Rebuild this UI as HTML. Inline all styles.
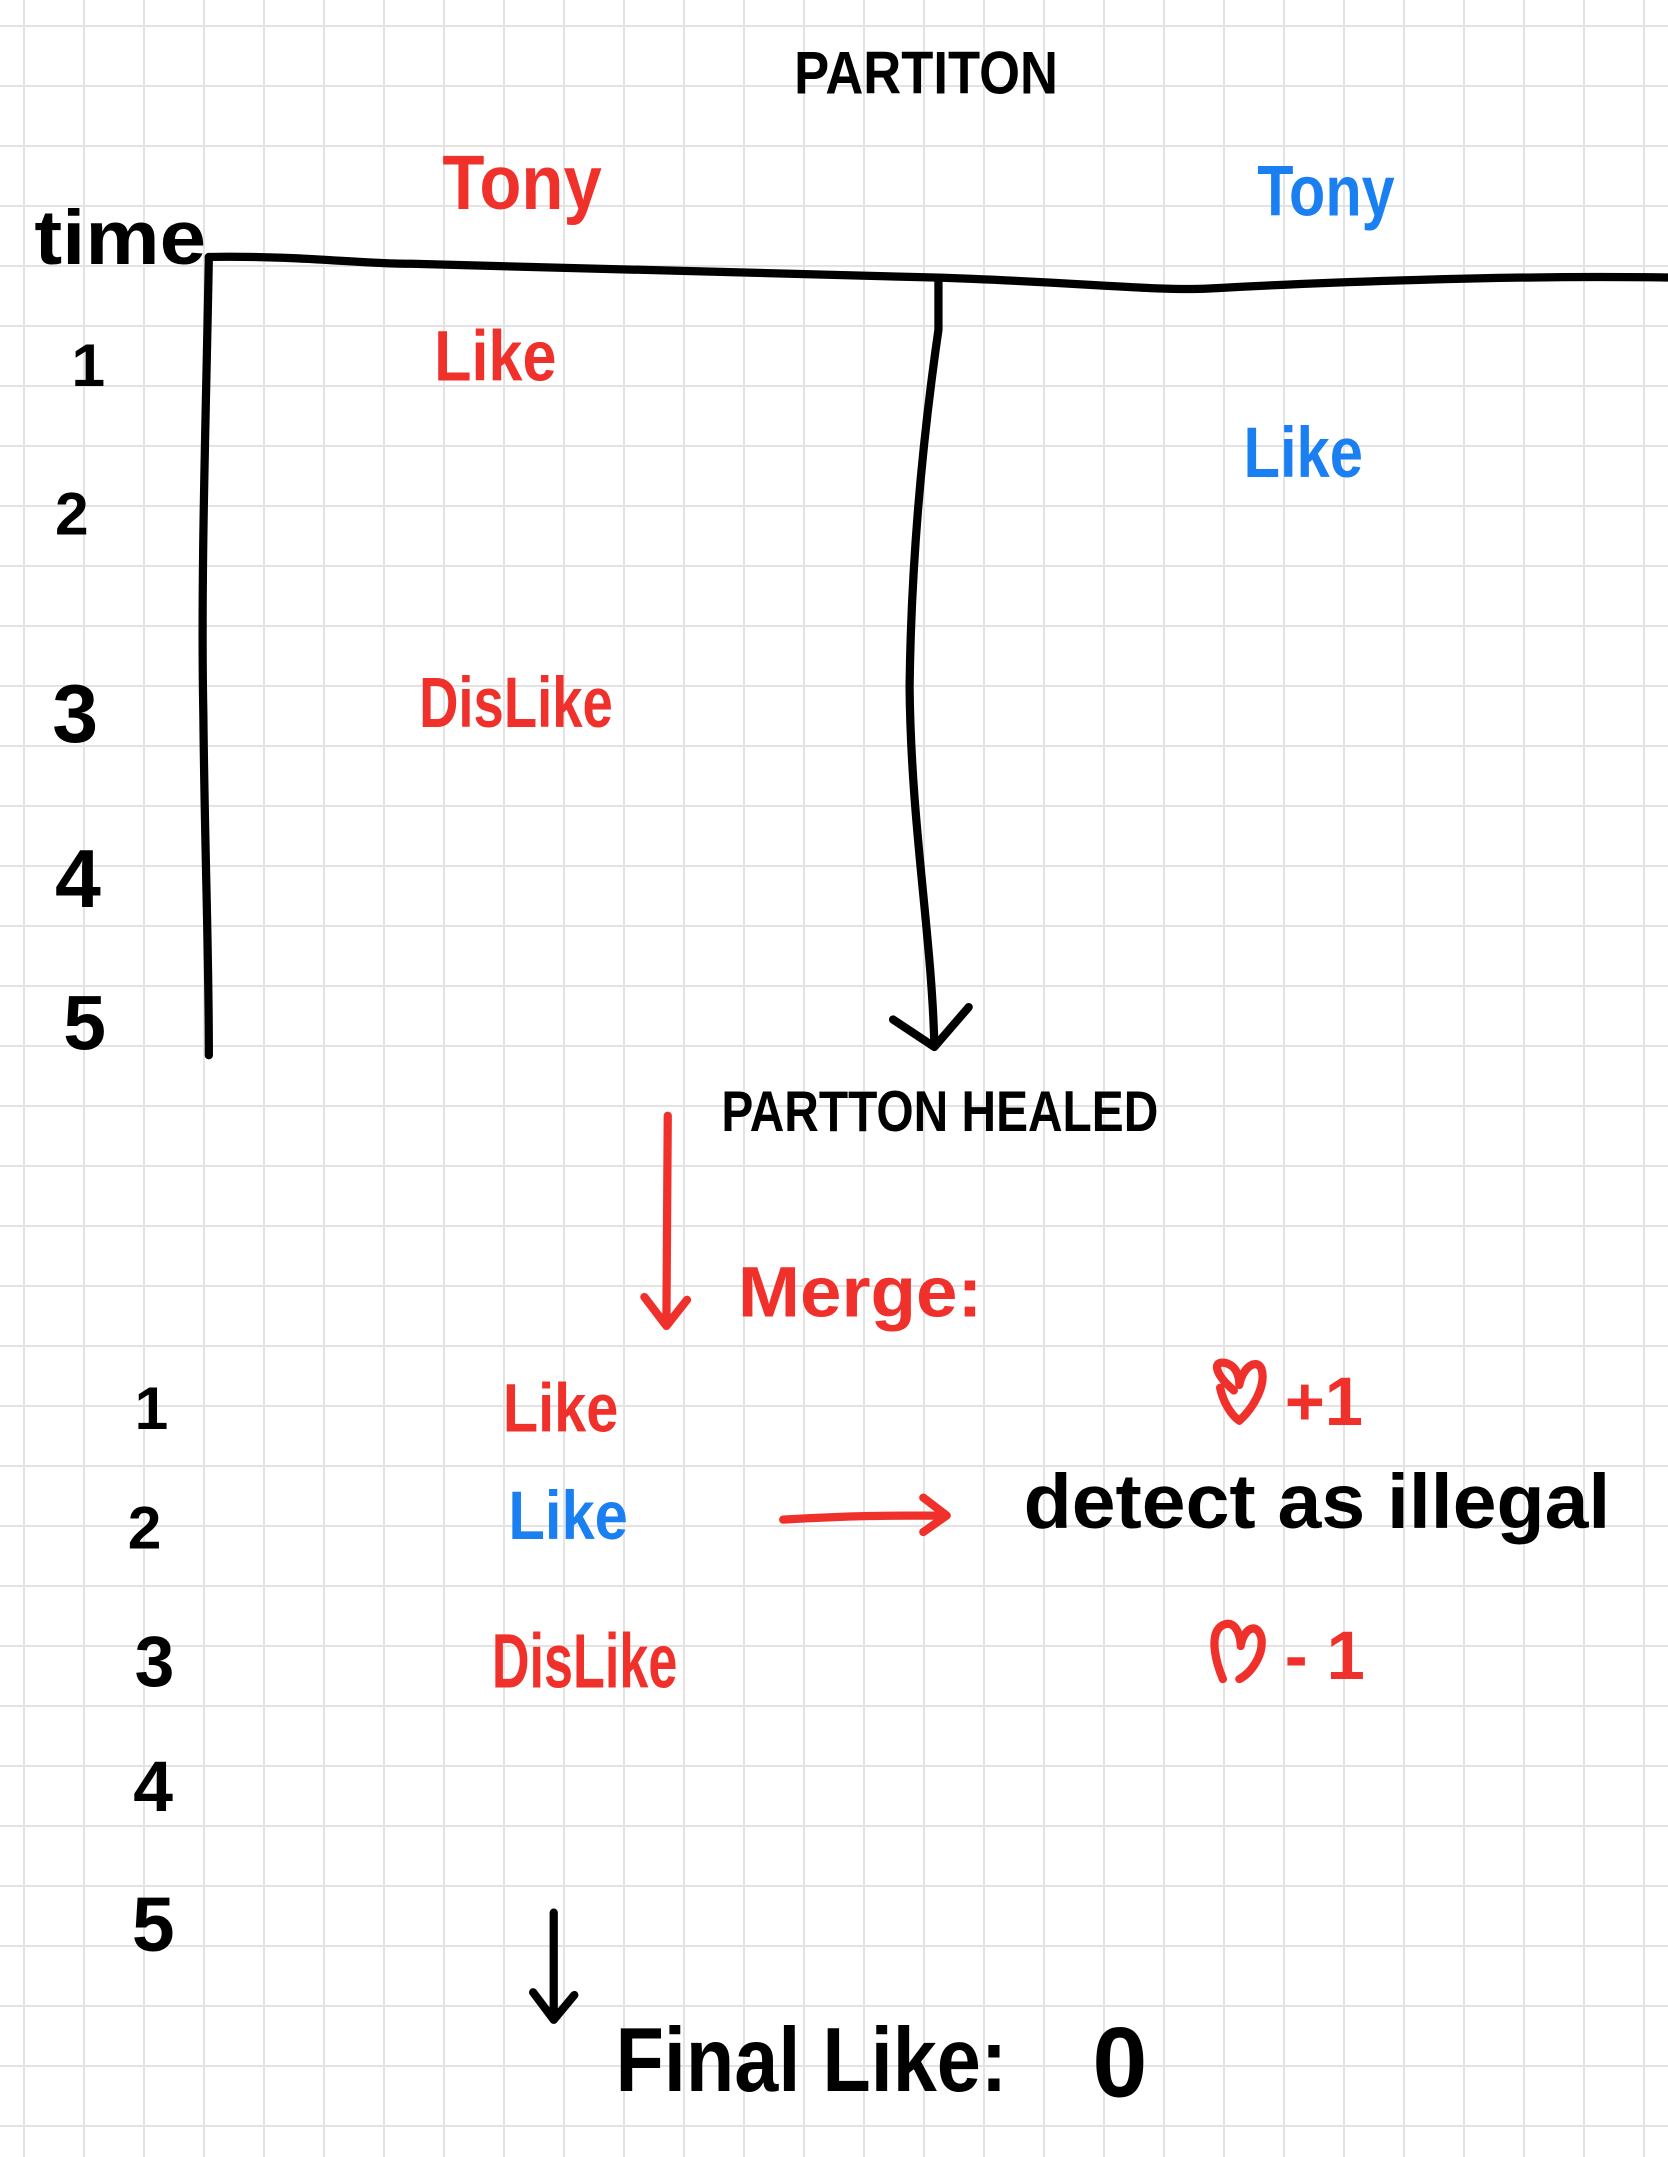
<!DOCTYPE html>
<html><head><meta charset="utf-8"><style>
html,body{margin:0;padding:0;}
body{width:1668px;height:2157px;overflow:hidden;background-color:#fff;
background-image:linear-gradient(to right,#e3e3e3 2px,transparent 2px),linear-gradient(to bottom,#e3e3e3 2px,transparent 2px);
background-size:60px 60px;background-position:23px 25px;}
svg{position:absolute;left:0;top:0;}
text{font-family:"Liberation Sans",sans-serif;font-weight:bold;}
</style></head><body>
<svg width="1668" height="2157" viewBox="0 0 1668 2157">
<g transform="scale(1.374)">
<g fill="none" stroke="#000" stroke-width="6" stroke-linecap="round" stroke-linejoin="round">
<path d="M152 187 C220 186 260 192 300 192 L680 202 C780 205 840 212 880 210 C950 206 1100 200 1214 202"/>
<path d="M152 187 C150 300 146 420 148 520 C149 620 152 690 152 768"/>
<path d="M683 205 L683 240 C670 330 663 420 662 500 C663 600 678 680 680 760"/>
<path d="M650 742 L680 762 L705 733"/>
<path d="M403 1392 L403 1468 M388 1450 L403 1470 L418 1452"/>
</g>
<g fill="none" stroke="#f0302a" stroke-width="6" stroke-linecap="round" stroke-linejoin="round">
<path d="M486 812 L485 963 M469 944 L485 965 L500 946"/>
<path d="M570 1106 C620 1103 650 1103 688 1103 M672 1090 L689 1103 L672 1115"/>
<path d="M898 1012 C884 1000 882 990 892 992 C900 994 902 1002 902 1008 C904 996 914 988 918 996 C922 1008 912 1025 902 1034 C896 1030 890 1020 888 1010"/>
<path d="M890 1222 C883 1205 880 1185 892 1182 C900 1180 903 1192 903 1198 C905 1185 915 1180 918 1192 C920 1205 910 1218 902 1222"/>
</g>
<text x="578" y="68" font-size="44" textLength="192" lengthAdjust="spacingAndGlyphs">PARTITON</text>
<text x="322" y="152" font-size="56" fill="#f0302a" textLength="116" lengthAdjust="spacingAndGlyphs">Tony</text>
<text x="915" y="157" font-size="52" fill="#1a7ff0" textLength="100" lengthAdjust="spacingAndGlyphs">Tony</text>
<text x="25" y="192" font-size="56" textLength="125" lengthAdjust="spacingAndGlyphs">time</text>
<text x="52" y="281" font-size="44">1</text>
<text x="40" y="389" font-size="44">2</text>
<text x="38" y="540" font-size="60">3</text>
<text x="40" y="660" font-size="60">4</text>
<text x="46" y="764" font-size="56">5</text>
<text x="316" y="277" font-size="52" fill="#f0302a" textLength="89" lengthAdjust="spacingAndGlyphs">Like</text>
<text x="905" y="347" font-size="52" fill="#1a7ff0" textLength="87" lengthAdjust="spacingAndGlyphs">Like</text>
<text x="305" y="529" font-size="52" fill="#f0302a" textLength="141" lengthAdjust="spacingAndGlyphs">DisLike</text>
<text x="525" y="823" font-size="42" textLength="318" lengthAdjust="spacingAndGlyphs">PARTTON HEALED</text>
<text x="537" y="958" font-size="52" fill="#f0302a" textLength="178" lengthAdjust="spacingAndGlyphs">Merge:</text>
<text x="98" y="1040" font-size="44">1</text>
<text x="93" y="1127" font-size="44">2</text>
<text x="98" y="1227" font-size="52">3</text>
<text x="97" y="1318" font-size="52">4</text>
<text x="96" y="1420" font-size="56">5</text>
<text x="366" y="1042" font-size="50" fill="#f0302a" textLength="84" lengthAdjust="spacingAndGlyphs">Like</text>
<text x="370" y="1120" font-size="50" fill="#1a7ff0" textLength="87" lengthAdjust="spacingAndGlyphs">Like</text>
<text x="358" y="1228" font-size="56" fill="#f0302a" textLength="135" lengthAdjust="spacingAndGlyphs">DisLike</text>
<text x="935" y="1037" font-size="50" fill="#f0302a">+1</text>
<text x="935" y="1222" font-size="50" fill="#f0302a">- 1</text>
<text x="745" y="1112" font-size="56" textLength="427" lengthAdjust="spacingAndGlyphs">detect  as illegal</text>
<text x="448" y="1522" font-size="66" textLength="285" lengthAdjust="spacingAndGlyphs">Final Like:</text>
<text x="795" y="1526" font-size="72">0</text>
</g>
</svg>
</body></html>
